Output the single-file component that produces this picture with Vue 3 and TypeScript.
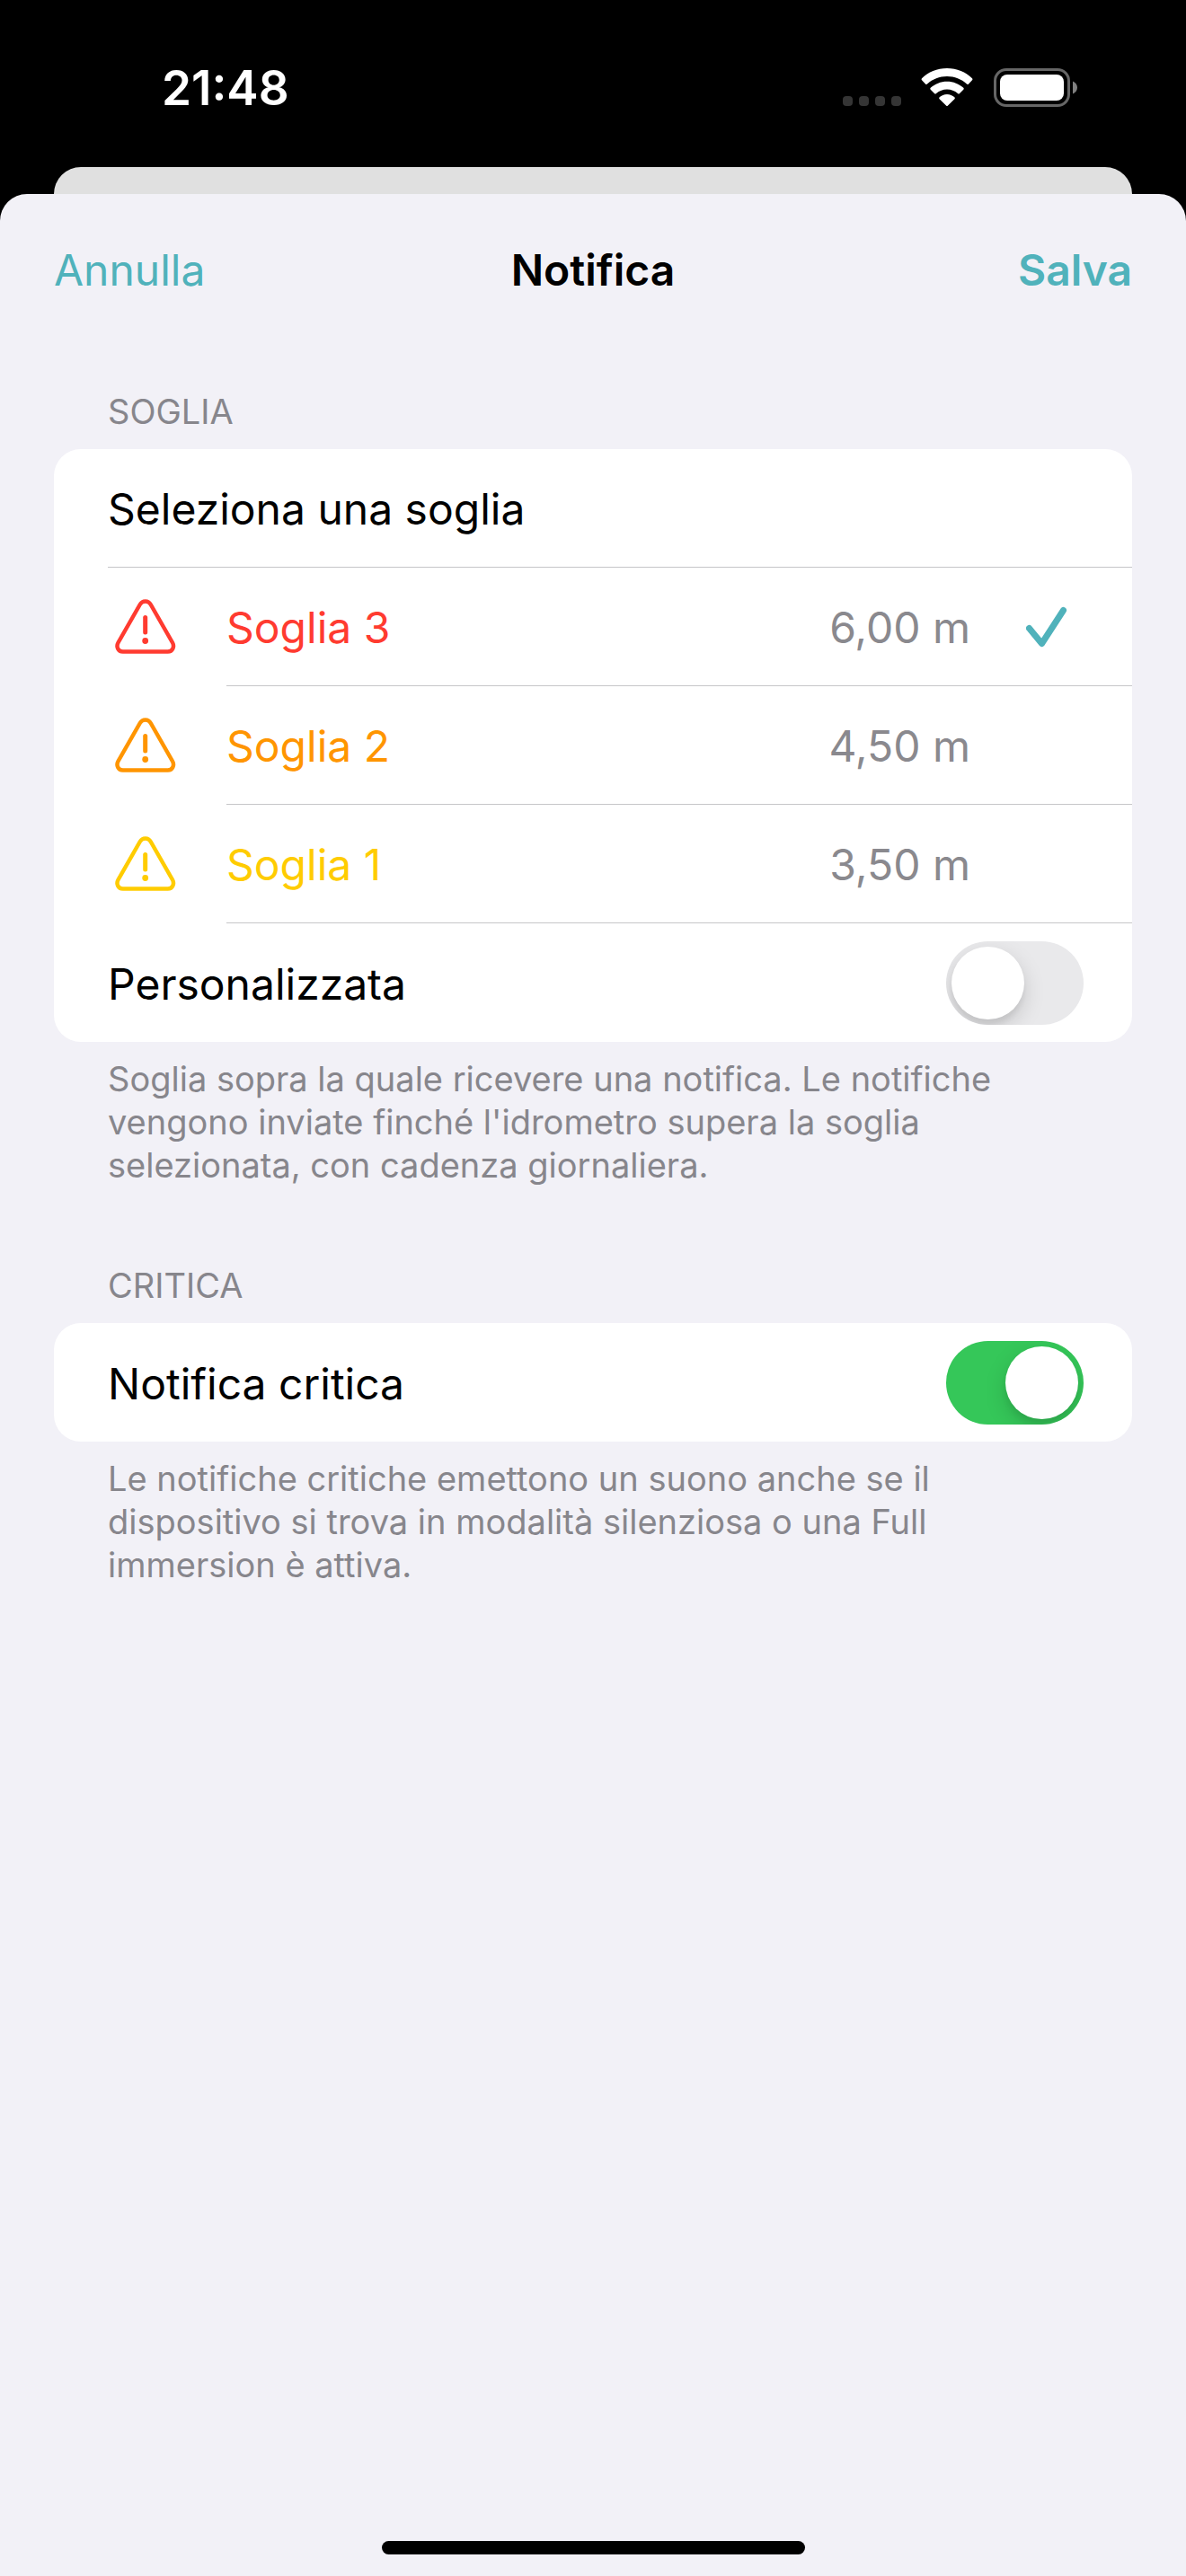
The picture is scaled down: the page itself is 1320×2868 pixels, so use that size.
<script setup lang="ts">
import { ref } from 'vue'

interface Threshold {
  id: string
  label: string
  value: string
  tone: string
}

const thresholds: Threshold[] = [
  { id: 's3', label: 'Soglia 3', value: '6,00 m', tone: 'red' },
  { id: 's2', label: 'Soglia 2', value: '4,50 m', tone: 'orange' },
  { id: 's1', label: 'Soglia 1', value: '3,50 m', tone: 'yellow' },
]

const selected = ref('s3')
const custom = ref(false)
const critical = ref(true)
</script>

<template>
  <div class="screen">
    <header class="status">
      <time class="clock">21:48</time>
      <div class="indicators">
        <svg class="signal" width="65" height="43" viewBox="0 0 65 43" fill="#353535" aria-hidden="true">
          <rect x="0" y="31" width="11" height="11" rx="4" />
          <rect x="18" y="31" width="11" height="11" rx="4" />
          <rect x="36" y="31" width="11" height="11" rx="4" />
          <rect x="54" y="31" width="11" height="11" rx="4" />
        </svg>
        <svg class="wifi" width="58" height="43" viewBox="0 0 58 43" fill="#fff" aria-hidden="true">
          <path d="M29 0C40 0 50 4.300 57 11.200Q58 12.200 57 13.200L53 17.400Q52 18.400 51 17.500C45 12 37.500 9 29 9S13 12 7 17.500Q6 18.400 5 17.400L1 13.200Q0 12.200 1 11.200C8 4.300 18 0 29 0Z" />
          <path d="M29 14.700C36 14.700 42.500 17.400 47.300 21.800Q48.300 22.800 47.300 23.800L43 28Q42 29 41 28C37.500 25 33.500 23.500 29 23.500S20.500 25 17 28Q16 29 15 28L10.700 23.800Q9.700 22.800 10.700 21.800C15.500 17.400 22 14.700 29 14.700Z" />
          <path d="M29 29C32.300 29 35.200 30.300 37.400 32.200Q38.400 33.200 37.400 34.200L30 41.600Q29 42.600 28 41.600L20.600 34.200Q19.600 33.200 20.600 32.200C22.800 30.300 25.700 29 29 29Z" />
        </svg>
        <svg class="battery" width="94" height="43" viewBox="0 0 94 43" aria-hidden="true">
          <rect x="1.500" y="1.500" width="82" height="40" rx="12.500" fill="none" stroke="#666" stroke-width="3" />
          <rect x="7" y="7" width="71" height="29" rx="8" fill="#fff" />
          <path d="M88 14.500C91 15.700 93 18.300 93 21.500S91 27.300 88 28.500Z" fill="#808080" />
        </svg>
      </div>
    </header>

    <div class="behind"></div>

    <main class="sheet">
      <nav class="bar">
        <button type="button" class="action">Annulla</button>
        <h1 class="title">Notifica</h1>
        <button type="button" class="action strong">Salva</button>
      </nav>

      <section class="group">
        <h2 class="caption">SOGLIA</h2>
        <div class="card" role="radiogroup" aria-labelledby="pick">
          <div class="row">
            <div class="body line">
              <span id="pick" class="name">Seleziona una soglia</span>
            </div>
          </div>
          <label v-for="t in thresholds" :key="t.id" class="row" :class="t.tone">
            <input v-model="selected" class="radio" type="radio" name="threshold" :value="t.id" />
            <span class="mark">
              <svg width="68" height="62" viewBox="0 0 68 62" fill="none" stroke="currentColor" aria-hidden="true">
                <path stroke-width="4.500" d="M27.800 6C30.500 1.200 37 1.200 39.700 6L64 48.500C66.500 53 64 58.500 58.800 58.500H8.700C3.500 58.500 1 53 3.500 48.500Z" />
                <path stroke-width="5" stroke-linecap="round" d="M33.700 20.500V37" />
                <circle cx="33.700" cy="46.500" r="3.400" fill="currentColor" stroke="none" />
              </svg>
            </span>
            <span class="body line">
              <span class="name">{{ t.label }}</span>
              <span class="value">{{ t.value }}</span>
              <span class="tick">
                <svg v-if="selected === t.id" width="46" height="46" viewBox="0 0 46 46" fill="none" stroke="#50b2bb" stroke-width="7" stroke-linecap="round" stroke-linejoin="round" aria-hidden="true">
                  <path d="M3.500 24.500L17.500 41.500L41.500 4.500" />
                </svg>
              </span>
            </span>
          </label>
          <div class="row">
            <label class="body">
              <span class="name">Personalizzata</span>
              <input v-model="custom" class="switch" type="checkbox" role="switch" />
            </label>
          </div>
        </div>
        <p class="note">
          Soglia sopra la quale ricevere una notifica. Le notifiche vengono inviate finché l'idrometro
          supera la soglia selezionata, con cadenza giornaliera.
        </p>
      </section>

      <section class="group">
        <h2 class="caption">CRITICA</h2>
        <div class="card">
          <div class="row">
            <label class="body">
              <span class="name">Notifica critica</span>
              <input v-model="critical" class="switch" type="checkbox" role="switch" />
            </label>
          </div>
        </div>
        <p class="note">
          Le notifiche critiche emettono un suono anche se il dispositivo si trova in modalità silenziosa o
          una Full immersion è attiva.
        </p>
      </section>

      <div class="home"></div>
    </main>
  </div>
</template>

<style>
body {
  margin: 0;
  background: #000;
}
</style>

<style scoped>
.screen {
  display: flex;
  flex-direction: column;
  min-height: 100vh;
  background: #000;
  color: #000;
  font-family: Inter, "Liberation Sans", sans-serif;
  font-size: 48px;
  line-height: 60px;
}
.status {
  display: flex;
  justify-content: space-between;
  align-items: center;
  box-sizing: border-box;
  height: 186px;
  padding: 8px 120px 0 180px;
}
.clock {
  padding-top: 2px;
  color: #fff;
  font-size: 53px;
  font-weight: 600;
}
.indicators {
  display: flex;
  gap: 22px;
}
.wifi {
  margin-right: 1px;
}
.behind {
  height: 30px;
  margin: 0 60px;
  border-radius: 30px 30px 0 0;
  background: #e0e0e0;
}
.sheet {
  display: flex;
  flex: 1;
  flex-direction: column;
  padding: 0 60px 24px;
  border-radius: 30px 30px 0 0;
  background: #f2f1f7;
}
.bar {
  display: grid;
  grid-template-columns: 1fr auto 1fr;
  align-items: center;
  height: 170px;
  margin-bottom: 48px;
}
.title {
  margin: 0;
  font-size: 48px;
  font-weight: 600;
}
.action {
  justify-self: start;
  padding: 0;
  border: 0;
  background: none;
  color: #50b2bb;
  font: inherit;
}
.strong {
  justify-self: end;
  font-weight: 600;
}
.group {
  margin-bottom: 86px;
}
.caption,
.note {
  margin: 0 60px;
  color: #87868c;
  font-size: 38px;
  font-weight: 400;
  line-height: 48px;
}
.caption {
  margin-bottom: 18px;
}
.note {
  margin-top: 17px;
}
.card {
  overflow: hidden;
  border-radius: 30px;
  background: #fff;
}
.row {
  position: relative;
  display: flex;
  height: 132px;
  padding-left: 60px;
}
.body {
  display: flex;
  flex: 1;
  align-items: center;
  box-sizing: border-box;
  padding-right: 54px;
}
.line {
  border-bottom: 1px solid #c6c6c8;
}
.name,
.value {
  padding-top: 3px;
}
.name {
  flex: 1;
}
.mark {
  display: flex;
  align-items: center;
  width: 124px;
  padding-left: 8px;
}
.value {
  color: #8a898e;
}
.tick {
  display: flex;
  justify-content: flex-end;
  width: 108px;
  margin-right: 18px;
}
.red {
  color: #ff3b30;
}
.orange {
  color: #ff9500;
}
.yellow {
  color: #ffcc00;
}
.radio {
  position: absolute;
  width: 1px;
  height: 1px;
  margin: 0;
  opacity: 0;
}
.switch {
  display: flex;
  appearance: none;
  box-sizing: border-box;
  width: 153px;
  height: 93px;
  margin: 0;
  padding: 6px;
  overflow: hidden;
  border-radius: 47px;
  background: #e9e9eb;
}
.switch::before {
  content: "";
  width: 81px;
  height: 81px;
  border-radius: 50%;
  background: #fff;
  box-shadow: 0 9px 24px rgba(0, 0, 0, 0.15), 0 6px 6px rgba(0, 0, 0, 0.06);
}
.switch:checked {
  justify-content: flex-end;
  background: #35c759;
}
.home {
  width: 471px;
  max-width: 60%;
  height: 15px;
  margin: auto auto 0;
  border-radius: 8px;
  background: #000;
}
</style>
